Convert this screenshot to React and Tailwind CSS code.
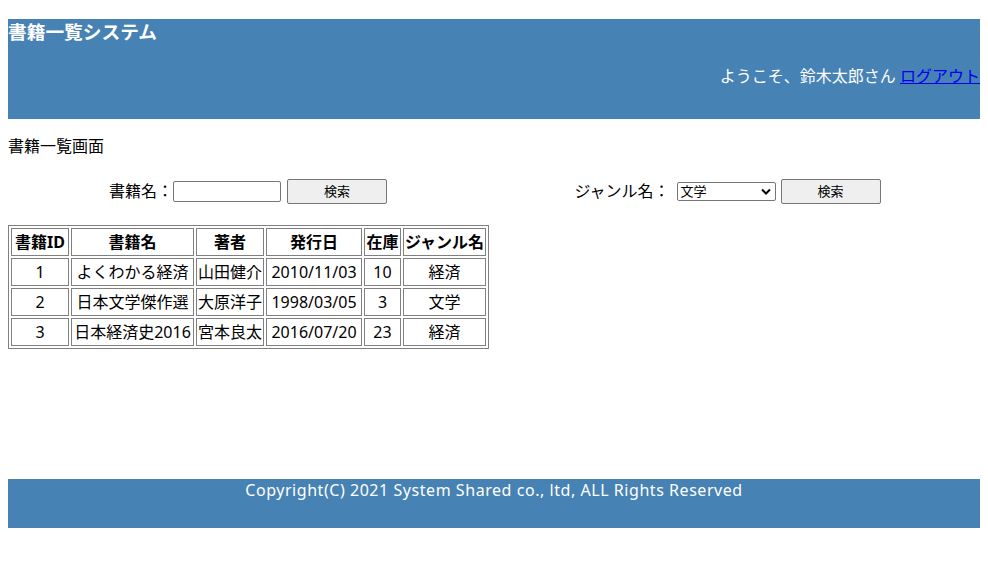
import React from 'react'

const FONT = { fontFamily: '"Noto Sans", "Noto Sans CJK JP", sans-serif' }

const BOOKS = [
  { id: 1, title: 'よくわかる経済', author: '山田健介', date: '2010/11/03', stock: 10, genre: '経済' },
  { id: 2, title: '日本文学傑作選', author: '大原洋子', date: '1998/03/05', stock: 3, genre: '文学' },
  { id: 3, title: '日本経済史2016', author: '宮本良太', date: '2016/07/20', stock: 23, genre: '経済' },
]

const COLS = [
  { label: '書籍ID', w: 'w-[58px]' },
  { label: '書籍名', w: 'w-[123px]' },
  { label: '著者', w: 'w-[68px]' },
  { label: '発行日', w: 'w-[96px]' },
  { label: '在庫', w: 'w-[37px]' },
  { label: 'ジャンル名', w: 'w-[83px]' },
]

function SearchButton() {
  return (
    <button className="w-[100px] h-[25px] bg-[#efefef] border border-[#767676] rounded-[2px] text-[13px] leading-none text-black">
      検索
    </button>
  )
}

export default function App() {
  return (
    <div className="bg-white min-h-[575px] px-[8px] pt-[19px] text-black text-[16px]" style={FONT}>
      {/* Header */}
      <header className="bg-[#4682b4] h-[100px] text-white">
        <h1 className="text-[18.72px] font-bold leading-[26px]">書籍一覧システム</h1>
        <div className="mt-[19px] text-right leading-[24px] whitespace-nowrap">
          ようこそ、鈴木太郎さん <a href="#" className="text-[#0000ee] underline">ログアウト</a>
        </div>
      </header>

      <p className="mt-[15px] leading-[24px]">書籍一覧画面</p>

      {/* Search */}
      <div className="mt-[20px] grid grid-cols-2 h-[25px]">
        <div className="flex items-center justify-center pr-[6px]">
          <span className="leading-[24px]">書籍名：</span>
          <div className="w-[108px] h-[21px] border border-[#767676] rounded-[2px] bg-white" />
          <div className="ml-[6px]"><SearchButton /></div>
        </div>
        <div className="flex items-center justify-center pr-[19px]">
          <span className="leading-[24px]">ジャンル名：</span>
          <div className="ml-[7px] w-[99px] h-[19px] border border-[#767676] rounded-[2px] bg-white flex items-center justify-between pl-[3px] pr-[4px]">
            <span className="text-[13px] leading-none">文学</span>
            <svg width="10" height="7" viewBox="0 0 10 7" fill="none">
              <path d="M1 1.5l4 4 4-4" stroke="black" strokeWidth="2" />
            </svg>
          </div>
          <div className="ml-[5px]"><SearchButton /></div>
        </div>
      </div>

      {/* Table */}
      <table className="mt-[22px] border border-[#808080] border-separate border-spacing-[2px] table-fixed w-[481px]">
        <thead>
          <tr>
            {COLS.map((c) => (
              <th key={c.label} className={`${c.w} h-[28px] border border-[#808080] px-0 text-center font-bold leading-[24px] whitespace-nowrap`}>
                {c.label}
              </th>
            ))}
          </tr>
        </thead>
        <tbody>
          {BOOKS.map((b) => (
            <tr key={b.id}>
              {[b.id, b.title, b.author, b.date, b.stock, b.genre].map((v, i) => (
                <td key={i} className="h-[28px] border border-[#808080] px-0 text-center leading-[24px] whitespace-nowrap">
                  {v}
                </td>
              ))}
            </tr>
          ))}
        </tbody>
      </table>

      {/* Footer */}
      <footer className="mt-[130px] bg-[#4682b4] h-[49px] text-white text-center leading-[22px] tracking-[0.55px]">
        Copyright(C) 2021 System Shared co., ltd, ALL Rights Reserved
      </footer>
    </div>
  )
}
